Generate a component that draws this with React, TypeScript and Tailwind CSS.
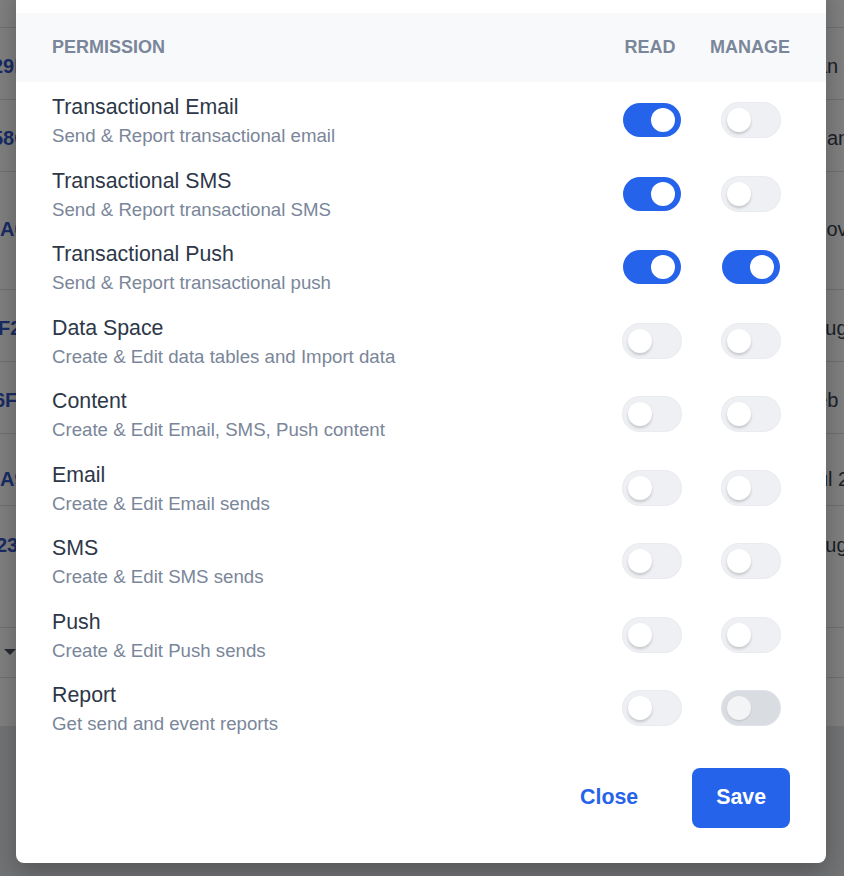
import React from "react";

type Perm = {
  title: string;
  desc: string;
  read: boolean;
  manage: boolean;
  dimmed?: boolean;
};

const PERMISSIONS: Perm[] = [
  { title: "Transactional Email", desc: "Send & Report transactional email", read: true, manage: false },
  { title: "Transactional SMS", desc: "Send & Report transactional SMS", read: true, manage: false },
  { title: "Transactional Push", desc: "Send & Report transactional push", read: true, manage: true },
  { title: "Data Space", desc: "Create & Edit data tables and Import data", read: false, manage: false },
  { title: "Content", desc: "Create & Edit Email, SMS, Push content", read: false, manage: false },
  { title: "Email", desc: "Create & Edit Email sends", read: false, manage: false },
  { title: "SMS", desc: "Create & Edit SMS sends", read: false, manage: false },
  { title: "Push", desc: "Create & Edit Push sends", read: false, manage: false },
  { title: "Report", desc: "Get send and event reports", read: false, manage: false, dimmed: true },
];

// rows of the page behind the dialog
const BG_ROWS = [
  { h: "h-[72px]", pt: "pt-[26px]", id: "29B4", idOff: "ml-[-8px]", date: "Jan 12", dateOff: "ml-[754px]" },
  { h: "h-[72px]", pt: "pt-[26px]", id: "58C1", idOff: "ml-[-8px]", date: "Jan 30", dateOff: "ml-[765px]" },
  { h: "h-[118px]", pt: "pt-[45px]", id: "A0D7", idOff: "ml-[0px]", date: "Nov 04", dateOff: "ml-[752px]" },
  { h: "h-[72px]", pt: "pt-[26px]", id: "F2E9", idOff: "ml-[-2px]", date: "Aug 18", dateOff: "ml-[754px]" },
  { h: "h-[72px]", pt: "pt-[26px]", id: "6F1A", idOff: "ml-[-6px]", date: "Feb 02", dateOff: "ml-[750px]" },
  { h: "h-[72px]", pt: "pt-[33px]", id: "A9C3", idOff: "ml-[0px]", date: "Jul 21", dateOff: "ml-[747px]" },
  { h: "h-[122px]", pt: "pt-[27px]", id: "23F8", idOff: "ml-[-4px]", date: "Aug 09", dateOff: "ml-[756px]" },
];

function Toggle({ on, dimmed }: { on: boolean; dimmed?: boolean }) {
  if (on) {
    return (
      <div className="flex h-[34px] w-[58px] items-center rounded-full bg-[#2563eb] px-[5px]">
        <div className="h-[24px] w-[24px] translate-x-[23px] rounded-full bg-white" />
      </div>
    );
  }
  if (dimmed) {
    return (
      <div className="flex h-[34px] w-[58px] items-center rounded-full bg-[#d9dce1] px-[5px] shadow-[0_0_0_1px_#dfe2e6]">
        <div className="h-[24px] w-[24px] rounded-full bg-[#f3f4f6] shadow-[0_1px_2px_rgba(0,0,0,0.12)]" />
      </div>
    );
  }
  return (
    <div className="flex h-[34px] w-[58px] items-center rounded-full bg-[#eef0f3] px-[5px] shadow-[0_0_0_1px_#e9ebef]">
      <div className="h-[24px] w-[24px] rounded-full bg-white shadow-[0_2px_3px_rgba(0,0,0,0.18)]" />
    </div>
  );
}

export default function App() {
  return (
    <div
      className="relative h-[876px] w-[844px] overflow-hidden bg-[#e5e7eb]"
      style={{ fontFamily: '"Liberation Sans", Arial, sans-serif' }}
    >
      {/* page behind */}
      <div className="bg-white">
        <div className="h-[28px] border-b border-[#dcdfe4]" />
        {BG_ROWS.map((r) => (
          <div key={r.id} className={`flex border-b border-[#dcdfe4] ${r.h} ${r.pt}`}>
            <div className={`w-[60px] shrink-0 whitespace-nowrap text-[20px] leading-[24px] font-semibold text-[#3357c9] ${r.idOff}`}>
              {r.id}
            </div>
            <div className={`shrink-0 whitespace-nowrap text-[20px] leading-[24px] text-[#374151] ${r.dateOff}`}>
              {r.date}
            </div>
          </div>
        ))}
        <div className="flex h-[50px] items-center border-b border-[#dcdfe4] pl-[4px]">
          <svg width="12" height="8" viewBox="0 0 12 8">
            <path d="M0 0 L12 0 L6 6 Z" fill="#4b5563" />
          </svg>
        </div>
        <div className="h-[48px]" />
      </div>

      {/* overlay */}
      <div className="absolute inset-0 bg-black/50" />

      {/* dialog */}
      <div className="absolute left-[16px] top-[-20px] w-[810px] rounded-[8px] bg-white pt-[33px] pb-[35px] shadow-[0_10px_25px_rgba(0,0,0,0.25)]">
        <div className="grid h-[69px] grid-cols-[1fr_80px_80px] items-center gap-x-[20px] bg-[#f8f9fb] px-[36px] text-[18px] font-bold text-[#7a8699]">
          <div>PERMISSION</div>
          <div className="text-center">READ</div>
          <div className="text-center">MANAGE</div>
        </div>

        {PERMISSIONS.map((p) => (
          <div key={p.title} className="grid h-[73.5px] grid-cols-[1fr_84px_78px] items-start gap-x-[18px] px-[36px]">
            <div className="pt-[11px]">
              <div className="text-[21.33px] leading-[28px] text-[#2d3748]">{p.title}</div>
              <div className="mt-[3px] text-[18.67px] leading-[24px] text-[#7a8699]">{p.desc}</div>
            </div>
            <div className="flex justify-center pt-[21px]">
              <Toggle on={p.read} />
            </div>
            <div className="flex justify-center pt-[21px]">
              <Toggle on={p.manage} dimmed={p.dimmed} />
            </div>
          </div>
        ))}

        <div className="mt-[24.5px] flex justify-end gap-[27px] px-[36px]">
          <button className="h-[60px] px-[27px] text-[21.33px] font-bold text-[#2563eb]">Close</button>
          <button className="h-[60px] rounded-[8px] bg-[#2563eb] px-[24px] text-[21.33px] font-bold text-white">
            Save
          </button>
        </div>
      </div>
    </div>
  );
}
